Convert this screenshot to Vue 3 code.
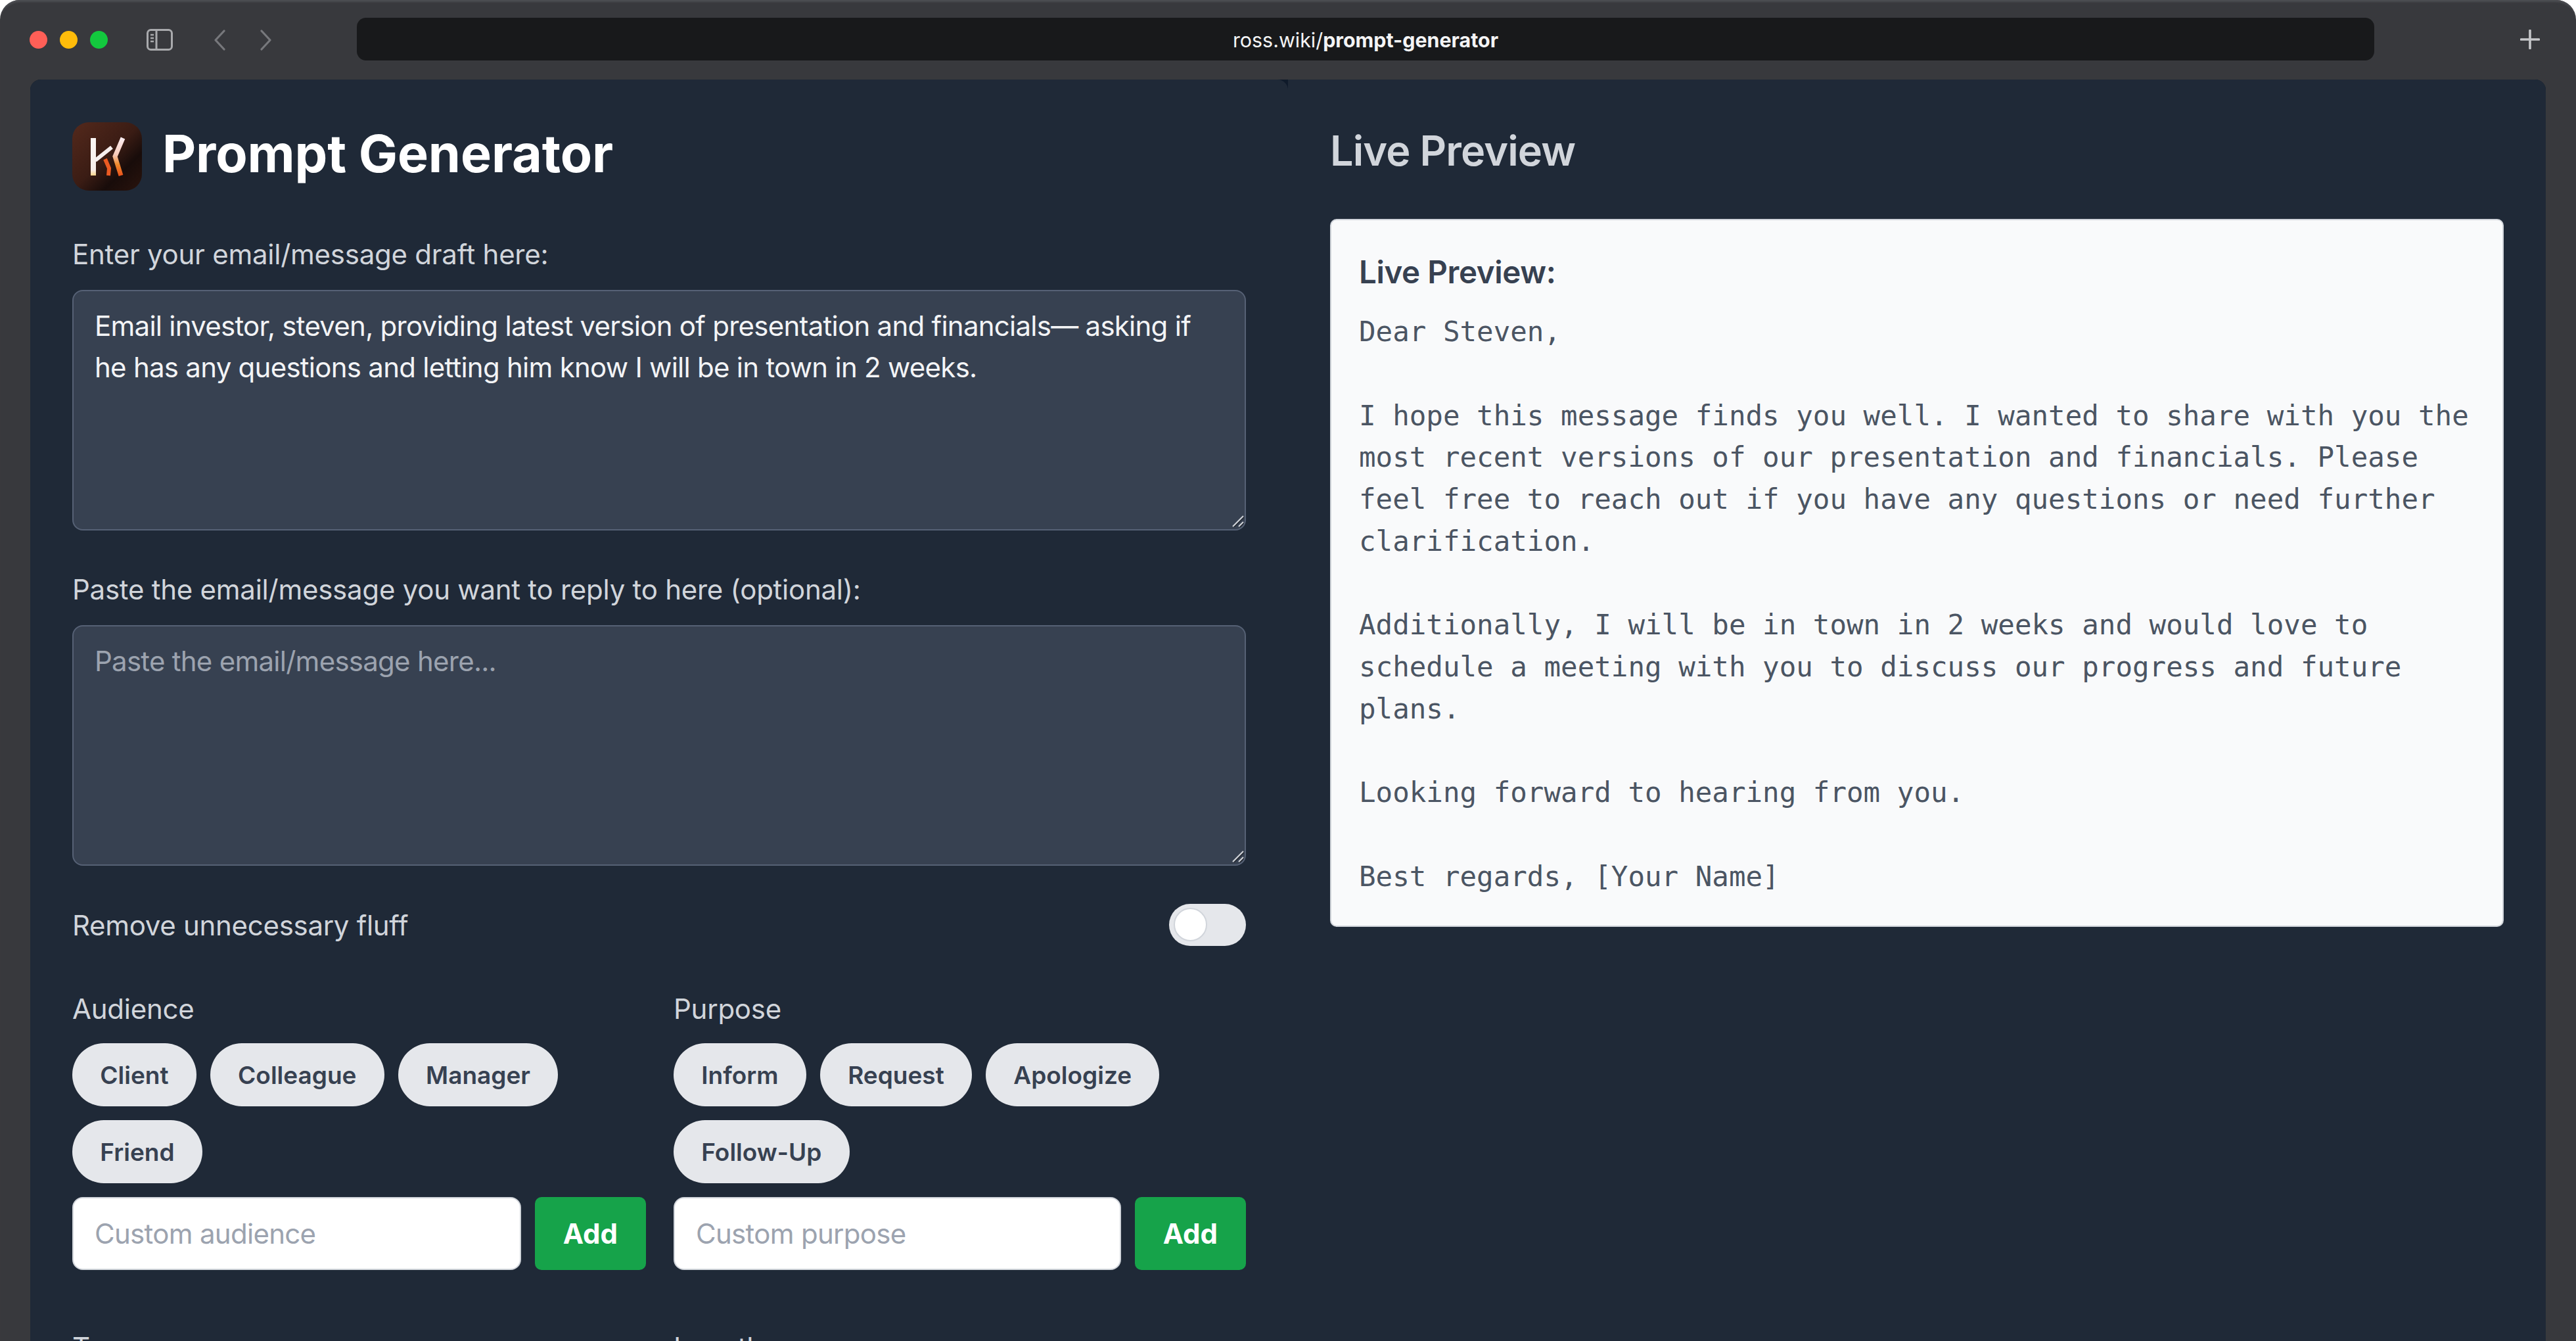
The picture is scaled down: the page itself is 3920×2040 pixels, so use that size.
<script setup>
const draft = 'Email investor, steven, providing latest version of presentation and financials— asking if he has any questions and letting him know I will be in town in 2 weeks.'
const preview = `Dear Steven,

I hope this message finds you well. I wanted to share with you the most recent versions of our presentation and financials. Please feel free to reach out if you have any questions or need further clarification.

Additionally, I will be in town in 2 weeks and would love to schedule a meeting with you to discuss our progress and future plans.

Looking forward to hearing from you.

Best regards, [Your Name]`
const groups = [
  { label: 'Audience', chips: ['Client', 'Colleague', 'Manager', 'Friend'], placeholder: 'Custom audience' },
  { label: 'Purpose', chips: ['Inform', 'Request', 'Apologize', 'Follow-Up'], placeholder: 'Custom purpose' }
]
</script>

<template>
  <div class="window">
    <header class="toolbar">
      <div class="lights">
        <span class="light red"></span>
        <span class="light yellow"></span>
        <span class="light green"></span>
      </div>
      <svg class="side-icon" width="40" height="33" viewBox="0 0 40 33" fill="none">
        <rect x="1.5" y="1.5" width="37" height="30" rx="5" stroke="#a9aaad" stroke-width="3" />
        <path d="M15 2v29" stroke="#a9aaad" stroke-width="3" />
        <path d="M6 9h5M6 14h5M6 19h5" stroke="#a9aaad" stroke-width="2.5" />
      </svg>
      <svg class="nav back" width="18" height="32" viewBox="0 0 18 32" fill="none">
        <path d="M16 2 3 16l13 14" stroke="#77787c" stroke-width="3.2" stroke-linecap="round" stroke-linejoin="round" />
      </svg>
      <svg class="nav forward" width="18" height="32" viewBox="0 0 18 32" fill="none">
        <path d="M2 2l13 14L2 30" stroke="#77787c" stroke-width="3.2" stroke-linecap="round" stroke-linejoin="round" />
      </svg>
      <div class="address"><span>ross.wiki/</span><strong>prompt-generator</strong></div>
      <svg class="plus" width="30" height="30" viewBox="0 0 30 30" fill="none">
        <path d="M15 1.5v27M1.5 15h27" stroke="#c6c7ca" stroke-width="3.6" stroke-linecap="round" />
      </svg>
    </header>

    <main class="content">
      <section class="panel left">
        <div class="title-row">
          <svg class="logo" width="106" height="104" viewBox="0 0 106 104">
            <defs>
              <linearGradient id="lg-bg" x1="0" y1="0" x2="1" y2="1">
                <stop offset="0" stop-color="#54291c" />
                <stop offset="0.5" stop-color="#3a1c14" />
                <stop offset="0.72" stop-color="#180c0a" />
                <stop offset="1" stop-color="#2a140d" />
              </linearGradient>
              <linearGradient id="lg-k" gradientUnits="userSpaceOnUse" x1="0" y1="24" x2="0" y2="81">
                <stop offset="0" stop-color="#fdeef2" />
                <stop offset="0.45" stop-color="#f6c9b8" />
                <stop offset="0.7" stop-color="#f08a2c" />
                <stop offset="1" stop-color="#e8531c" />
              </linearGradient>
              <linearGradient id="lg-s" gradientUnits="userSpaceOnUse" x1="0" y1="24" x2="0" y2="81">
                <stop offset="0" stop-color="#fbf6f4" />
                <stop offset="0.85" stop-color="#f7ece8" />
                <stop offset="1" stop-color="#f7d48a" />
              </linearGradient>
            </defs>
            <rect width="106" height="104" rx="25" fill="url(#lg-bg)" />
            <path d="M32 24v57" stroke="url(#lg-s)" stroke-width="8" fill="none" />
            <path d="M35 58 60 38" stroke="#f7efee" stroke-width="6" fill="none" />
            <path d="M50 56 56 70 55 81" stroke="#ea5a22" stroke-width="6" fill="none" />
            <path d="M77 24 65 52 74 81" stroke="url(#lg-k)" stroke-width="7" fill="none" />
          </svg>
          <h1>Prompt Generator</h1>
        </div>

        <label class="field-label">Enter your email/message draft here:</label>
        <div class="area-wrap">
          <textarea class="area" :value="draft"></textarea>
          <svg class="grip" width="18" height="18" viewBox="0 0 18 18" fill="none">
            <path d="M1 17 17 1M10 17l7-7" stroke="#20262f" stroke-width="2.5" transform="translate(1 1)" />
            <path d="M1 17 17 1M10 17l7-7" stroke="#cfd2d8" stroke-width="2.2" />
          </svg>
        </div>

        <label class="field-label">Paste the email/message you want to reply to here (optional):</label>
        <div class="area-wrap">
          <textarea class="area" placeholder="Paste the email/message here..."></textarea>
          <svg class="grip" width="18" height="18" viewBox="0 0 18 18" fill="none">
            <path d="M1 17 17 1M10 17l7-7" stroke="#20262f" stroke-width="2.5" transform="translate(1 1)" />
            <path d="M1 17 17 1M10 17l7-7" stroke="#cfd2d8" stroke-width="2.2" />
          </svg>
        </div>

        <div class="toggle-row">
          <span>Remove unnecessary fluff</span>
          <span class="toggle"><span class="knob"></span></span>
        </div>

        <div class="groups">
          <div v-for="g in groups" :key="g.label" class="group">
            <div class="group-label">{{ g.label }}</div>
            <div class="chips">
              <button v-for="c in g.chips" :key="c" class="chip">{{ c }}</button>
            </div>
            <div class="custom">
              <input class="custom-input" :placeholder="g.placeholder" />
              <button class="add">Add</button>
            </div>
          </div>
          <div class="group-label">Tone</div>
          <div class="group-label">Length</div>
        </div>
      </section>

      <section class="panel right">
        <h2>Live Preview</h2>
        <div class="card">
          <h3>Live Preview:</h3>
          <pre>{{ preview }}</pre>
        </div>
      </section>
    </main>
  </div>
</template>

<style>
html, body { margin: 0; background: #ffffff; }
</style>

<style scoped>
* { box-sizing: border-box; }
.window {
  width: 3920px;
  height: 2040px;
  overflow: hidden;
  display: flex;
  flex-direction: column;
  padding: 0 46px;
  background: #38393d;
  border-radius: 30px 30px 0 0;
  box-shadow: inset 0 5px 3px -2px #4d4e53;
  font-family: Inter, "Liberation Sans", sans-serif;
}
.toolbar {
  flex: none;
  height: 121px;
  display: flex;
  align-items: center;
  position: relative;
}
.lights { display: flex; gap: 19px; margin-left: -1px; }
.light { width: 27px; height: 27px; border-radius: 50%; }
.red { background: #ff5f57; }
.yellow { background: #ffbc0a; }
.green { background: #13c83e; }
.side-icon { margin-left: 59px; }
.nav { flex: none; }
.back { margin-left: 62px; }
.forward { margin-left: 53px; }
.address {
  margin-left: 129px;
  width: 3070px;
  height: 65px;
  margin-top: -2px;
  background: #18191b;
  border-radius: 14px;
  color: #f4f4f5;
  font-size: 30.4px;
  line-height: 68px;
  text-align: center;
}
.address strong { font-weight: 700; }
.plus { margin-left: 222px; margin-top: -2px; }
.content {
  flex: 1;
  display: grid;
  grid-template-columns: 1914px 1914px;
  background: #0f1a2a;
  border-radius: 16px 16px 0 0;
  overflow: hidden;
}
.panel { background: #1f2937; padding: 64px; min-width: 0; }
.left { border-top-right-radius: 16px; }
.title-row { display: flex; align-items: center; gap: 31px; height: 106px; margin-bottom: 66px; }
.logo { flex: none; }
h1 { margin: -10px 0 0; font-size: 79px; line-height: 106px; font-weight: 700; color: #ffffff; letter-spacing: -0.1px; }
.field-label {
  display: block;
  margin-bottom: 25px;
  color: #d1d5db;
  font-size: 42px;
  line-height: 59px;
  font-weight: 400;
  letter-spacing: -0.25px;
}
.area-wrap { position: relative; margin: 0 0 60px; }
.grip { position: absolute; right: 3px; bottom: 5px; pointer-events: none; }
.area {
  display: block;
  width: 100%;
  height: 366px;
  padding: 21px 32px;
  background: #374151;
  border: 2.5px solid #566175;
  border-radius: 16px;
  color: #f3f4f6;
  font-family: inherit;
  font-size: 42px;
  line-height: 63.4px;
  letter-spacing: -0.74px;
  resize: none;
  outline: none;
}
.area::placeholder { color: #9ca3af; opacity: 1; }
.toggle-row {
  height: 64px;
  margin-top: -2px;
  margin-bottom: 66px;
  display: flex;
  align-items: center;
  justify-content: space-between;
  color: #d1d5db;
  font-size: 42px;
  letter-spacing: -0.3px;
}
.toggle {
  width: 117px;
  height: 64px;
  padding: 6px 7px;
  border-radius: 32px;
  background: #e5e7eb;
}
.knob {
  display: block;
  width: 51px;
  height: 51px;
  border-radius: 50%;
  background: #ffffff;
  border: 2px solid #d1d5db;
}
.groups {
  display: grid;
  grid-template-columns: 873px 871px;
  column-gap: 42px;
  row-gap: 88px;
}
.group-label {
  color: #d1d5db;
  font-size: 42px;
  line-height: 59px;
  letter-spacing: -0.25px;
}
.group { min-width: 0; }
.group .group-label { margin-bottom: 23px; }
.chips { display: flex; flex-wrap: wrap; gap: 21px; margin-bottom: 21px; }
.chip {
  height: 96px;
  padding: 0 42.3px;
  border: none;
  border-radius: 48px;
  background: #e5e7eb;
  color: #374151;
  font-family: inherit;
  font-size: 37px;
  font-weight: 600;
  line-height: 93px;
}
.custom { display: flex; gap: 21px; }
.custom-input {
  flex: 1;
  min-width: 0;
  height: 111px;
  padding: 0 32px;
  background: #ffffff;
  border: 2.5px solid #d1d5db;
  border-radius: 16px;
  font-family: inherit;
  font-size: 42px;
  letter-spacing: -0.7px;
  outline: none;
}
.custom-input::placeholder { color: #9ca3af; opacity: 1; }
.add {
  flex: none;
  height: 111px;
  padding: 0 43px;
  border: none;
  border-radius: 10px;
  background: #16a34a;
  color: #ffffff;
  font-family: inherit;
  font-size: 42px;
  font-weight: 700;
}
h2 {
  margin: 2px 0 62px;
  font-size: 63px;
  line-height: 84px;
  font-weight: 600;
  color: #d1d5db;
  letter-spacing: -0.9px;
}
.card {
  background: #f9fafb;
  border: 2.5px solid #d1d5db;
  border-radius: 10px;
  padding: 42px;
}
h3 {
  margin: 0 0 22px;
  font-size: 47.5px;
  line-height: 74px;
  font-weight: 600;
  color: #374151;
  letter-spacing: -0.4px;
}
pre {
  margin: 0;
  white-space: pre-wrap;
  font-family: "DejaVu Sans Mono", monospace;
  font-size: 42.5px;
  line-height: 63.75px;
  color: #4b5563;
}
</style>
